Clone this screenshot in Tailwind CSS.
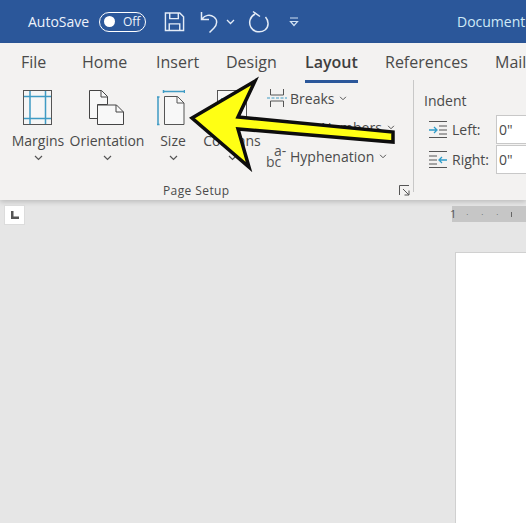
<!doctype html>
<html><head><meta charset="utf-8">
<script src="https://cdn.jsdelivr.net/npm/@tailwindcss/browser@4"></script>
</head>
<body class="m-0">
<div class="relative w-[526px] h-[523px] overflow-hidden bg-[#e6e6e6] font-['Open_Sans',sans-serif] text-[#444]">
  <!-- title bar -->
  <div class="h-[43px] bg-[#2b579a] flex items-center text-white whitespace-nowrap">
    <span class="ml-[28px] w-[63px] shrink-0 text-[14px] text-[#eef3fa]">AutoSave</span>
    <div class="ml-[8px] w-[47px] h-[20px] shrink-0 rounded-full border border-white flex items-center">
      <span class="ml-[4px] w-[11px] h-[11px] rounded-full bg-white"></span>
      <span class="ml-[8px] text-[12px] leading-none text-[#eef3fa]">Off</span>
    </div>
    <svg class="ml-[18px] shrink-0" width="21" height="21" viewBox="0 0 22 22" fill="none" stroke="#e4ecf7" stroke-width="1.5"><path d="M1.500 2h15l4 4v14.500h-19z"/><path d="M6 2v6h9V2M5.500 20.500v-7h11v7"/></svg>
    <svg class="ml-[15px] shrink-0" width="20" height="24" viewBox="0 0 20 24" fill="none" stroke="#e4ecf7" stroke-width="1.500"><path d="M1.500 2v7.500H9M2 9c3-4 8-5 12-2 4 3 3 8 0 11l-4.500 4.500"/></svg>
    <svg class="ml-[6px] shrink-0" width="9" height="6" viewBox="0 0 9 6" fill="none" stroke="#e4ecf7" stroke-width="1.300"><path d="M1 1l3.500 3.500L8 1"/></svg>
    <svg class="ml-[13px] shrink-0" width="24" height="24" viewBox="0 0 24 24" fill="none" stroke="#e4ecf7" stroke-width="1.500"><path d="M5 1.500l7 5M7 4C1.500 7 .5 13 3 17.500c3 5 10 5.500 14 2.500 4-3 4-9 .5-13"/></svg>
    <svg class="ml-[17px] shrink-0" width="10" height="10" viewBox="0 0 10 10" fill="none" stroke="#cfe0f2" stroke-width="1.200"><path d="M1 1h8M1.500 4.500L5 8.500l3.500-4z"/></svg>
    <span class="ml-[158px] shrink-0 text-[14px] text-[#cfeaf7]">Document</span>
  </div>
  <!-- ribbon -->
  <div class="h-[157px] bg-[#f3f2f1] shadow-[0_2px_5px_rgba(0,0,0,0.18)] relative">
    <div class="h-[37px] flex items-center text-[16px] whitespace-nowrap text-[#4a4a4a]">
      <span class="ml-[21px] w-[61px] shrink-0">File</span>
      <span class="w-[74px] shrink-0">Home</span>
      <span class="w-[70px] shrink-0">Insert</span>
      <span class="w-[79px] shrink-0">Design</span>
      <div class="relative w-[80px] shrink-0">
        <span class="font-semibold text-[#3f3f3f]">Layout</span>
        <span class="absolute left-0 top-[30px] w-[53px] h-[3px] bg-[#2b579a]"></span>
      </div>
      <span class="w-[110px] shrink-0">References</span>
      <span class="shrink-0">Mailings</span>
    </div>
    <div class="flex h-[120px]">
      <!-- page setup group -->
      <div class="w-[414px] h-[112px] border-r border-[#c8c8c8] relative flex shrink-0">
        <div class="w-[76px] flex flex-col items-center pt-[10px] text-[14px] text-[#4a4a4a]">
          <svg width="30" height="36" viewBox="0 0 30 36" fill="#fff"><rect x=".5" y=".5" width="28" height="34" fill="#f6f6f6" stroke="#555"/><path d="M1 6.500h27M1 28.500h27M7 1v33M22.500 1v33" stroke="#3f9bc4" stroke-width="1.500"/></svg>
          <span class="mt-[5px] leading-[20px]">Margins</span>
          <svg class="mt-[4px]" width="9" height="6" viewBox="0 0 9 6" fill="none" stroke="#555" stroke-width="1.200"><path d="M1 1l3.500 3.500L8 1"/></svg>
        </div>
        <div class="w-[62px] flex flex-col items-center pt-[10px] text-[14px] text-[#4a4a4a]">
          <svg width="36" height="36" viewBox="0 0 36 36" fill="#f8f8f8" stroke="#444"><path d="M.5.500h12l6 6v8H8.500v14H.5z"/><path d="M8.500 15h19l7 7v12.500h-26z"/><path d="M12 .5v6.500h6.500M27 15v7h7.500" fill="none"/></svg>
          <span class="mt-[5px] leading-[20px]">Orientation</span>
          <svg class="mt-[4px]" width="9" height="6" viewBox="0 0 9 6" fill="none" stroke="#555" stroke-width="1.200"><path d="M1 1l3.500 3.500L8 1"/></svg>
        </div>
        <div class="w-[70px] flex flex-col items-center pt-[10px] text-[14px] text-[#4a4a4a]">
          <svg class="-ml-[5px]" width="28" height="36" viewBox="0 0 28 36" fill="none"><path d="M6.500 1.500h21M6.500 0v3M27.500 0v3M1 7v28M0 7h2.500M0 34.500h2.500" stroke="#3f9bc4" stroke-width="1.500"/><path d="M7.500 6.500h13l6.500 6.500v21.500H7.500z" fill="#f8f8f8" stroke="#555"/><path d="M20 6.500V13h7" stroke="#555"/></svg>
          <span class="mt-[5px] leading-[20px]">Size</span>
          <svg class="mt-[4px]" width="9" height="6" viewBox="0 0 9 6" fill="none" stroke="#555" stroke-width="1.200"><path d="M1 1l3.500 3.500L8 1"/></svg>
        </div>
        <div class="w-[52px] flex flex-col items-center pt-[10px] text-[14px] text-[#4a4a4a] -ml-[2px]">
          <svg width="30" height="36" viewBox="0 0 30 36" fill="#f8f8f8"><rect x=".5" y=".5" width="29" height="34" stroke="#555"/><path d="M4 9h10M4 13h10M4 17h10M17 9h9" stroke="#3f9bc4" stroke-width="1.500"/></svg>
          <span class="mt-[5px] leading-[20px]">Columns</span>
          <svg class="mt-[4px]" width="9" height="6" viewBox="0 0 9 6" fill="none" stroke="#555" stroke-width="1.200"><path d="M1 1l3.500 3.500L8 1"/></svg>
        </div>
        <div class="ml-[8px] pt-[4px] flex flex-col text-[14px] text-[#4a4a4a] whitespace-nowrap">
          <div class="h-[29px] flex items-center">
            <svg width="22" height="19" viewBox="0 0 22 19" fill="none" stroke="#555"><path d="M4.500 0v6h13V0M4.500 18v-6h13v6"/><path d="M1 9h20" stroke="#3f9bc4" stroke-dasharray="3 1.500"/></svg>
            <span class="ml-[2px]">Breaks</span>
            <svg class="ml-[5px]" width="8" height="5" viewBox="0 0 9 6" fill="none" stroke="#555" stroke-width="1.200"><path d="M1 1l3.500 3.500L8 1"/></svg>
          </div>
          <div class="h-[29px] flex items-center">
            <span class="ml-[24px]">Line Numbers</span>
            <svg class="ml-[5px]" width="8" height="5" viewBox="0 0 9 6" fill="none" stroke="#555" stroke-width="1.200"><path d="M1 1l3.500 3.500L8 1"/></svg>
          </div>
          <div class="h-[29px] flex items-center">
            <span class="w-[24px] text-[14px] leading-[11px] text-[#555] -mt-[2px]"><span class="block pl-[8px]">a-</span><span class="block">bc</span></span>
            <span>Hyphenation</span>
            <svg class="ml-[5px]" width="8" height="5" viewBox="0 0 9 6" fill="none" stroke="#555" stroke-width="1.200"><path d="M1 1l3.500 3.500L8 1"/></svg>
          </div>
        </div>
        <span class="absolute left-[163px] top-[103px] text-[12px] leading-[16px] tracking-[0.4px] text-[#4a4a4a]">Page Setup</span>
        <svg class="absolute left-[399px] top-[105px]" width="11" height="11" viewBox="0 0 11 11" fill="none" stroke="#555"><path d="M.5 10V.5H10M4 4l6 6M10 5.500V10H5.500"/></svg>
      </div>
      <!-- indent -->
      <div class="ml-[10px] pt-[6px] text-[14px] text-[#4a4a4a] whitespace-nowrap">
        <div class="h-[28px] leading-[28px] pt-[1px]">Indent</div>
        <div class="h-[30px] flex items-center">
          <svg class="ml-[5px]" width="18" height="17" viewBox="0 0 18 17" fill="none"><path d="M0 .5h18M10 5h8M10 9h8M10 13h8M0 16.500h18" stroke="#555"/><path d="M0 9h7M5 6l3 3-3 3" stroke="#2e9cc9" stroke-width="1.300"/></svg>
          <span class="ml-[5px]">Left:</span>
          <div class="absolute left-[496px] w-[40px] h-[29px] bg-white border border-[#c8c8c8] pl-[2px] leading-[27px]">0"</div>
        </div>
        <div class="h-[30px] flex items-center">
          <svg class="ml-[5px]" width="18" height="17" viewBox="0 0 18 17" fill="none"><path d="M0 .5h18M0 5h8M0 9h8M0 13h8M0 16.500h18" stroke="#555"/><path d="M18 9h-7M13 6l-3 3 3 3" stroke="#2e9cc9" stroke-width="1.300"/></svg>
          <span class="ml-[5px]">Right:</span>
          <div class="absolute left-[496px] w-[40px] h-[29px] bg-white border border-[#c8c8c8] pl-[2px] leading-[27px]">0"</div>
        </div>
      </div>
    </div>
  </div>
  <!-- ruler row -->
  <div class="h-[52px] relative">
    <div class="flex items-start">
      <div class="ml-[4px] mt-[5px] w-[21px] h-[20px] shrink-0 bg-white border border-[#dcdcdc] flex items-center justify-center">
        <svg width="8" height="8" viewBox="0 0 8 8" fill="#555"><path d="M0 0h2.500v5.500H8V8H0z"/></svg>
      </div>
      <span class="relative z-10 ml-[425px] mt-[6px] shrink-0 text-[11px] leading-[16px] text-[#555]">1</span>
      <div class="-ml-[4px] mt-[6px] flex-1 h-[16px] bg-[#c6c6c6] flex items-center text-[#555] text-[8px] leading-none">
        <span class="ml-[14px] w-[15px]">·</span><span class="w-[15px]">·</span><span class="w-[15px]">·</span><span class="w-[1px] h-[5px] bg-[#666]"></span>
      </div>
    </div>
  </div>
  <!-- page -->
  <div class="ml-[455px] h-[271px] bg-white border-l border-t border-[#d0d0d0]"></div>
  <!-- arrow overlay -->
  <svg class="absolute left-0 top-0 pointer-events-none" width="526" height="523" viewBox="0 0 526 523"><path d="M192 118L255 81L238 117L393 132V142L238 129L249 167Z" fill="#ffff14" stroke="#0d0d0d" stroke-width="3.500" stroke-linejoin="miter"/></svg>
</div>
</body></html>
